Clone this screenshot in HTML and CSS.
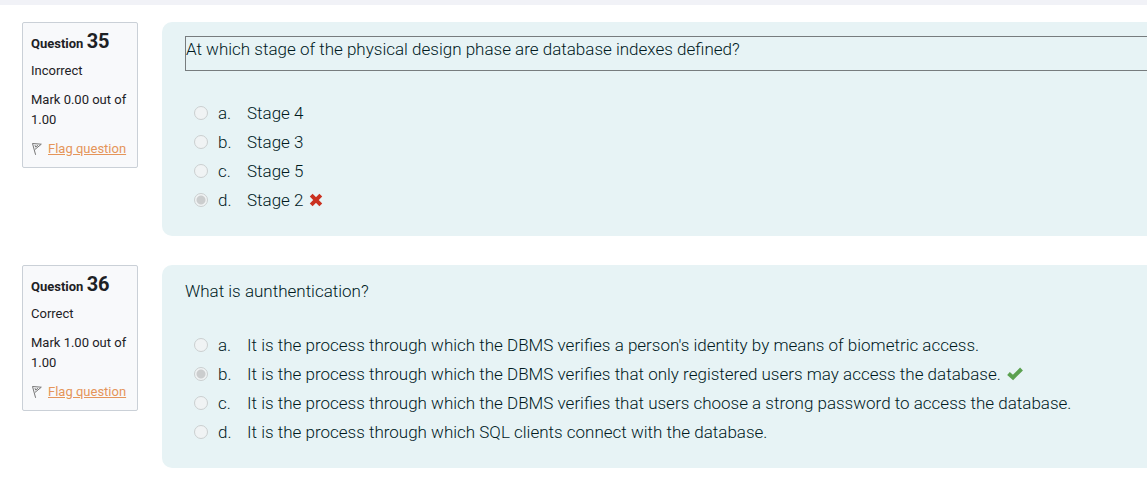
FILE: index.html
```html
<!DOCTYPE html>
<html lang="en">
<head>
<meta charset="utf-8">
<meta name="viewport" content="width=device-width, initial-scale=1">
<title>Quiz review</title>
<link rel="stylesheet" href="styles.css">
</head>
<body>
<main class="review">
  <section class="question">
    <aside class="info">
      <h2 class="number">Question <span class="qno">35</span></h2>
      <p class="state">Incorrect</p>
      <p class="mark">Mark 0.00 out of 1.00</p>
      <div class="flag">
        <svg class="flag-icon" viewBox="0 0 12 14" aria-hidden="true"><path d="M1.5 1.5 4.6 12.8M1.5 1.5 10.3 2.2 4 7.4M4 3.2 4.6 5 7 3.3"/></svg>
        <a href="#flag35">Flag question</a>
      </div>
    </aside>
    <div class="content">
      <div class="qtext focused" tabindex="-1"><p>At which stage of the physical design phase are database indexes defined?</p></div>
      <div class="answers">
        <div class="answer"><input type="radio" name="q35" id="q35a" disabled><label for="q35a"><span class="letter">a.</span><span>Stage 4</span></label></div>
        <div class="answer"><input type="radio" name="q35" id="q35b" disabled><label for="q35b"><span class="letter">b.</span><span>Stage 3</span></label></div>
        <div class="answer"><input type="radio" name="q35" id="q35c" disabled><label for="q35c"><span class="letter">c.</span><span>Stage 5</span></label></div>
        <div class="answer"><input type="radio" name="q35" id="q35d" checked disabled><label for="q35d"><span class="letter">d.</span><span>Stage 2</span></label>
          <svg class="wrong" viewBox="0 0 14 14" role="img" aria-label="Incorrect"><path d="M2.2 2.2 11.8 11.8M11.8 2.2 2.2 11.8"/></svg></div>
      </div>
    </div>
  </section>

  <section class="question">
    <aside class="info">
      <h2 class="number">Question <span class="qno">36</span></h2>
      <p class="state">Correct</p>
      <p class="mark">Mark 1.00 out of 1.00</p>
      <div class="flag">
        <svg class="flag-icon" viewBox="0 0 12 14" aria-hidden="true"><path d="M1.5 1.5 4.6 12.8M1.5 1.5 10.3 2.2 4 7.4M4 3.2 4.6 5 7 3.3"/></svg>
        <a href="#flag36">Flag question</a>
      </div>
    </aside>
    <div class="content">
      <div class="qtext"><p>What is aunthentication?</p></div>
      <div class="answers">
        <div class="answer"><input type="radio" name="q36" id="q36a" disabled><label for="q36a"><span class="letter">a.</span><span>It is the process through which the DBMS verifies a person's identity by means of biometric access.</span></label></div>
        <div class="answer"><input type="radio" name="q36" id="q36b" checked disabled><label for="q36b"><span class="letter">b.</span><span>It is the process through which the DBMS verifies that only registered users may access the database.</span></label>
          <svg class="right" viewBox="0 0 16 14" role="img" aria-label="Correct"><path d="M1.5 6.5 6 10.5 14.5 2"/></svg></div>
        <div class="answer"><input type="radio" name="q36" id="q36c" disabled><label for="q36c"><span class="letter">c.</span><span>It is the process through which the DBMS verifies that users choose a strong password to access the database.</span></label></div>
        <div class="answer"><input type="radio" name="q36" id="q36d" disabled><label for="q36d"><span class="letter">d.</span><span>It is the process through which SQL clients connect with the database.</span></label></div>
      </div>
    </div>
  </section>
</main>
</body>
</html>
```
FILE: styles.css
```css
* {
  box-sizing: border-box;
}

body {
  margin: 0;
  background: #fff;
  color: #1d2125;
  font-family: Roboto, "Liberation Sans", sans-serif;
  font-size: 17px;
  line-height: 24px;
}

p,
h2 {
  margin: 0;
}

.review {
  display: flex;
  flex-direction: column;
  gap: 29px;
  border-top: 5px solid #f1f2f7;
  padding: 17px 0 20px 22px;
}

.question {
  display: flex;
  align-items: flex-start;
  gap: 24px;
}

.info {
  flex: 0 0 116px;
  padding: 8px 7px 8px 8px;
  border: 1px solid #cad0d7;
  border-radius: 2px;
  background: #f8f9fb;
  font-size: 13px;
  line-height: 20px;
}

.number {
  font-size: 13px;
  font-weight: 700;
  line-height: 21px;
}

.qno {
  font-size: 20px;
}

.state {
  margin-top: 7px;
}

.mark,
.flag {
  margin-top: 9px;
}

.flag {
  display: flex;
  align-items: center;
  gap: 5px;
  white-space: nowrap;
}

.flag-icon {
  flex: none;
  width: 12px;
  height: 14px;
  fill: none;
  stroke: #777;
  stroke-width: 1;
}

.flag a {
  color: #e5955a;
}

.content {
  flex: 1;
  min-width: 0;
  padding: 14px 0 22px 23px;
  border-radius: 10px 0 0 10px;
  background: #e7f3f5;
  color: #001a1e;
  font-weight: 300;
}

.qtext {
  margin-bottom: 27px;
}

.focused {
  padding-bottom: 9px;
  border: 1px solid #777c7e;
  border-right: 0;
}

.answer {
  display: flex;
  align-items: center;
  min-height: 29px;
  padding-left: 9px;
}

.answer input {
  appearance: none;
  flex: none;
  width: 14px;
  height: 14px;
  margin: 0 10px 0 0;
  border: 1px solid #cbcfd0;
  border-radius: 50%;
  background: #f0f3f4;
}

.answer input:checked {
  background: radial-gradient(circle, #cbcdce 4px, #f0f3f4 5px);
}

.answer label {
  display: flex;
}

.letter {
  flex: 0 0 29px;
}

.wrong,
.right {
  flex: none;
  height: 14px;
  margin-left: 6px;
  fill: none;
}

.wrong {
  width: 14px;
  stroke: #ca3120;
  stroke-width: 4;
}

.right {
  width: 16px;
  stroke: #5ba150;
  stroke-width: 4;
}
```
